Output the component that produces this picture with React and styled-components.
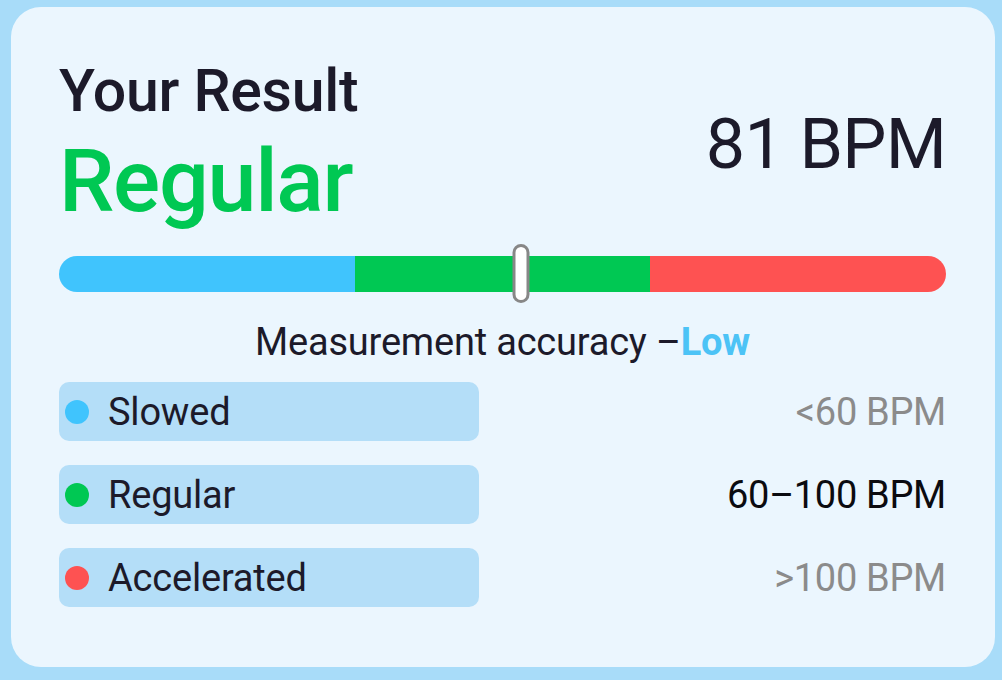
import React from 'react';
import styled, { createGlobalStyle } from 'styled-components';

const GlobalStyle = createGlobalStyle`
  html, body {
    margin: 0;
    padding: 0;
    background: #a8dcf9;
  }
  body {
    font-family: Roboto, "Noto Sans", "Liberation Sans", sans-serif;
  }
`;

const Page = styled.div`
  padding: 7px 7px 13px 11px;
  width: 1002px;
  height: 680px;
  box-sizing: border-box;
`;

const Card = styled.div`
  background: #ebf6fe;
  border-radius: 30px;
  height: 660px;
  box-sizing: border-box;
  padding: 54px 49px 0 48px;
  color: #1c1a2a;
`;

const Header = styled.div`
  display: flex;
  justify-content: space-between;
  align-items: center;
`;

const TitleBlock = styled.div`
  display: flex;
  flex-direction: column;
  gap: 17px;
`;

const Title = styled.div`
  font-size: 59px;
  font-weight: 500;
  line-height: 1;
  letter-spacing: -0.3px;
`;

const Status = styled.div`
  font-size: 88px;
  font-weight: 500;
  line-height: 1;
  color: #00c853;
  letter-spacing: -1.3px;
`;

const Rate = styled.div`
  font-size: 70px;
  font-weight: 400;
  line-height: 1;
  letter-spacing: -0.8px;
  margin-top: 2px;
`;

const Scale = styled.div`
  position: relative;
  margin-top: 31px;
`;

const Track = styled.div`
  display: flex;
  height: 36px;
  border-radius: 18px;
  overflow: hidden;
`;

const Segment = styled.div`
  flex: 1;
  background: ${(p) => p.$color};
`;

const Thumb = styled.div`
  position: absolute;
  top: -12px;
  width: 17px;
  height: 59px;
  box-sizing: border-box;
  background: #ffffff;
  border: 3px solid #878787;
  border-radius: 9px;
  transform: translateX(-50%);
`;

const Accuracy = styled.div`
  margin-top: 31px;
  text-align: center;
  font-size: 38px;
  line-height: 1;
  letter-spacing: -0.2px;
  span {
    color: #4cc3f6;
    font-weight: 700;
  }
`;

const Legend = styled.div`
  display: flex;
  flex-direction: column;
  gap: 24px;
  margin-top: 21px;
`;

const Row = styled.div`
  display: flex;
  justify-content: space-between;
  align-items: center;
`;

const Pill = styled.div`
  display: flex;
  align-items: center;
  width: 420px;
  height: 59px;
  box-sizing: border-box;
  padding-left: 6px;
  background: #b4def8;
  border-radius: 10px;
`;

const Dot = styled.span`
  width: 24px;
  height: 24px;
  border-radius: 50%;
  background: ${(p) => p.$color};
  margin-right: 19px;
`;

const Label = styled.span`
  font-size: 38px;
  line-height: 1;
  letter-spacing: -0.2px;
`;

const Range = styled.span`
  font-size: 38px;
  line-height: 1;
  letter-spacing: -0.3px;
  color: ${(p) => (p.$active ? '#0b0b10' : '#8b8b8b')};
`;

const zones = [
  { name: 'Slowed', color: '#40c4fd', range: '<60 BPM' },
  { name: 'Regular', color: '#00c853', range: '60–100 BPM', active: true },
  { name: 'Accelerated', color: '#fe5252', range: '>100 BPM' },
];

export default function App() {
  const bpm = 81;
  const thumbPos = 52.1;
  return (
    <Page>
      <GlobalStyle />
      <Card>
        <Header>
          <TitleBlock>
            <Title>Your Result</Title>
            <Status>Regular</Status>
          </TitleBlock>
          <Rate>{bpm} BPM</Rate>
        </Header>
        <Scale>
          <Track>
            {zones.map((z) => (
              <Segment key={z.name} $color={z.color} />
            ))}
          </Track>
          <Thumb style={{ left: `${thumbPos}%` }} />
        </Scale>
        <Accuracy>
          Measurement accuracy –<span>Low</span>
        </Accuracy>
        <Legend>
          {zones.map((z) => (
            <Row key={z.name}>
              <Pill>
                <Dot $color={z.color} />
                <Label>{z.name}</Label>
              </Pill>
              <Range $active={z.active}>{z.range}</Range>
            </Row>
          ))}
        </Legend>
      </Card>
    </Page>
  );
}
